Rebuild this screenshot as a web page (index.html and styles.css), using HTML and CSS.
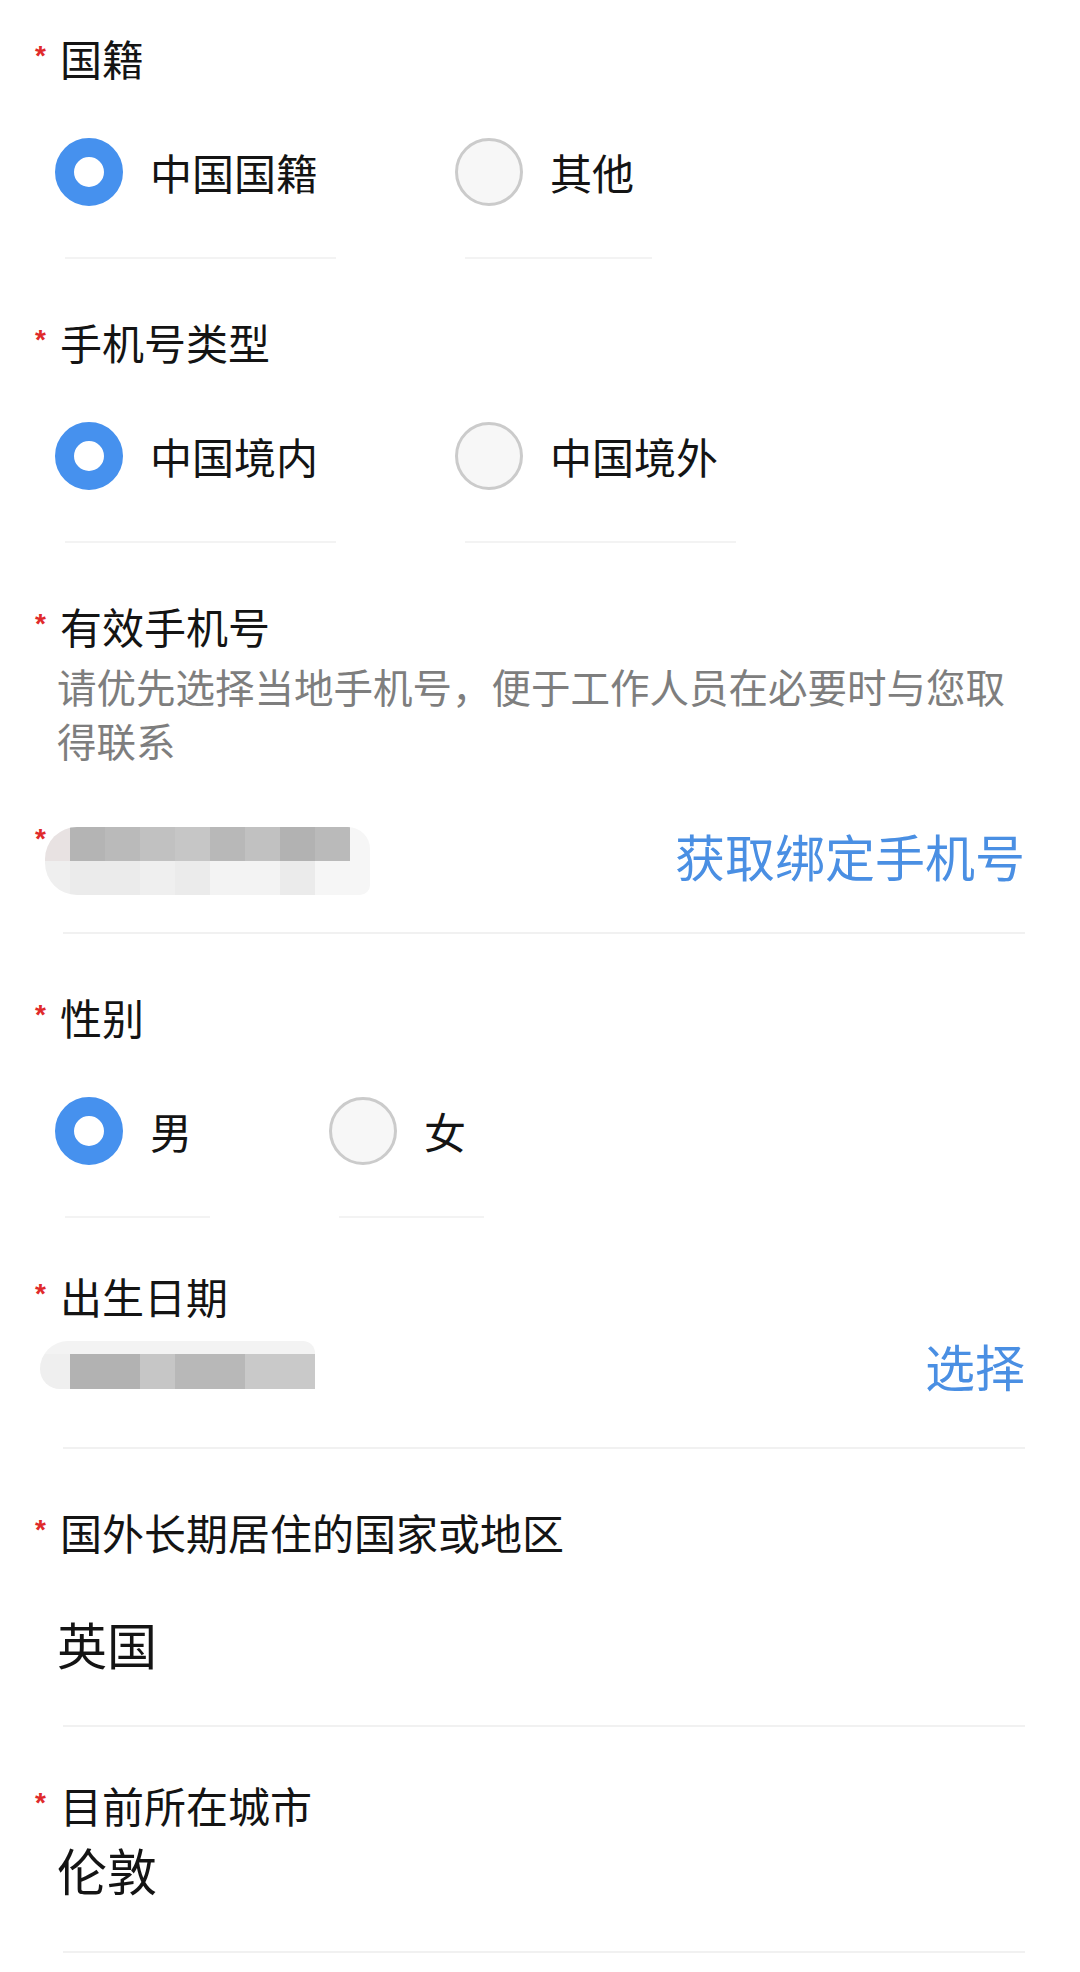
FILE: index.html
```html
<!DOCTYPE html>
<html lang="zh-CN">
<head>
    <meta charset="UTF-8">
    <meta name="viewport" content="width=device-width, initial-scale=1.0">
    <title>信息登记</title>
    <link rel="stylesheet" href="styles.css">
</head>
<body>

<div class="form">

    <!-- 国籍 -->
    <div class="field">
        <div class="label"><span class="req">*</span>国籍</div>
        <div class="radios">
            <div class="option checked"><span class="radio"></span><span>中国国籍</span></div>
            <div class="option"><span class="radio"></span><span>其他</span></div>
        </div>
    </div>

    <!-- 手机号类型 -->
    <div class="field">
        <div class="label"><span class="req">*</span>手机号类型</div>
        <div class="radios">
            <div class="option checked"><span class="radio"></span><span>中国境内</span></div>
            <div class="option"><span class="radio"></span><span>中国境外</span></div>
        </div>
    </div>

    <!-- 有效手机号 -->
    <div class="field">
        <div class="label"><span class="req">*</span>有效手机号</div>
        <div class="hint">请优先选择当地手机号，便于工作人员在必要时与您取得联系</div>
        <div class="row phone-row">
            <div class="row-left">
                <span class="req small">*</span>
                <div class="mosaic phone">
                    <span class="p0"></span><span class="g1"></span><span class="g2"></span><span class="g3"></span><span class="g4"></span>
                    <span class="g5"></span><span class="g3"></span><span class="g6"></span><span class="g2"></span><span class="l4"></span>
                    <span class="l2"></span><span class="l1"></span><span class="l1"></span><span class="l2"></span><span class="l1"></span>
                    <span class="l3"></span><span class="l3"></span><span class="l1"></span><span class="l4"></span><span class="l4"></span>
                </div>
            </div>
            <span class="link">获取绑定手机号</span>
        </div>
        <div class="divider"></div>
    </div>

    <!-- 性别 -->
    <div class="field">
        <div class="label"><span class="req">*</span>性别</div>
        <div class="radios">
            <div class="option checked"><span class="radio"></span><span>男</span></div>
            <div class="option"><span class="radio"></span><span>女</span></div>
        </div>
    </div>

    <!-- 出生日期 -->
    <div class="field tight">
        <div class="label"><span class="req">*</span>出生日期</div>
        <div class="row date-row">
            <div class="mosaic date">
                <span class="l3"></span><span class="l3"></span><span class="l3"></span><span class="l3"></span><span class="l3"></span>
                <span class="l2"></span><span class="g6"></span><span class="g4"></span><span class="g5"></span><span class="g7"></span>
            </div>
            <span class="link">选择</span>
        </div>
        <div class="divider"></div>
    </div>

    <!-- 国外长期居住的国家或地区 -->
    <div class="field">
        <div class="label"><span class="req">*</span>国外长期居住的国家或地区</div>
        <div class="value far">英国</div>
        <div class="divider"></div>
    </div>

    <!-- 目前所在城市 -->
    <div class="field tight">
        <div class="label"><span class="req">*</span>目前所在城市</div>
        <div class="value">伦敦</div>
        <div class="divider"></div>
    </div>

</div>

</body>
</html>
```

FILE: styles.css
```css
body {
    margin: 0;
    background: #fff;
    font-family: "Noto Sans CJK SC", "Noto Sans", sans-serif;
    color: #141414;
}
.form {
    padding: 0 55px 0 35px;
}
.field {
    padding-top: 55px;
}
.field:first-child {
    padding-top: 30px;
}
.field.tight {
    padding-top: 50px;
}
.label {
    display: flex;
    align-items: flex-start;
    font-size: 42px;
    line-height: 56px;
}
.req {
    width: 25px;
    flex: none;
    margin-top: 12px;
    font-family: "Liberation Sans", Arial, sans-serif;
    font-weight: bold;
    font-size: 28px;
    line-height: 1;
    color: #e02a2a;
}
.req.small {
    width: 10px;
    margin-top: -2px;
}

/* radio groups */
.radios {
    display: flex;
    gap: 129px;
    margin: 52px 0 0 30px;
}
.option {
    display: flex;
    align-items: center;
    padding: 0 18px 51px 0;
    border-bottom: 2px solid #f3f3f3;
    font-size: 42px;
    line-height: 68px;
}
.radio {
    box-sizing: border-box;
    width: 68px;
    height: 68px;
    margin: 0 27px 0 -10px;
    border: 3px solid #cbcbcb;
    border-radius: 50%;
    background: #f7f7f7;
}
.option.checked .radio {
    border: 19px solid #4691ee;
    background: #fff;
}

.hint {
    margin: 5px 0 0 22px;
    font-size: 39.5px;
    line-height: 54px;
    color: #7e7e7e;
}

/* input rows */
.row {
    display: flex;
    align-items: center;
    justify-content: space-between;
}
.row-left {
    display: flex;
    align-items: flex-start;
}
.phone-row {
    margin-top: 60px;
    height: 68px;
}
.phone-row .link {
    margin-top: -12px;
}
.date-row {
    margin: 11px 0 0 5px;
    height: 60px;
}
.link {
    font-size: 50px;
    line-height: 60px;
    color: #4a8fe3;
}
.divider {
    height: 2px;
    margin: 52px 0 0 28px;
    background: #f1f1f1;
}
.phone-row + .divider {
    margin-top: 37px;
}
.value {
    margin: 6px 0 4px 22px;
    font-size: 50px;
    line-height: 60px;
}
.value.far {
    margin-top: 53px;
    margin-bottom: 5px;
}

/* blurred parts of the screenshot */
.mosaic {
    display: grid;
    overflow: hidden;
}
.mosaic.phone {
    grid-template-columns: 25px repeat(8, 35px) 20px;
    grid-template-rows: 34px 34px;
    border-radius: 32px 22px 10px 32px;
}
.mosaic.date {
    grid-template-columns: 30px 70px 35px 70px 70px;
    grid-template-rows: 13px 35px;
    border-radius: 28px 12px 0 20px;
}
.p0 { background: #e8e2e2; }
.g1 { background: #b4b4b4; }
.g2 { background: #bababa; }
.g3 { background: #c1c1c1; }
.g4 { background: #c6c6c6; }
.g5 { background: #b8b8b8; }
.g6 { background: #b2b2b2; }
.g7 { background: #c9c9c9; }
.l1 { background: #ebebeb; }
.l2 { background: #efefef; }
.l3 { background: #f3f3f3; }
.l4 { background: #f6f6f6; }
```
